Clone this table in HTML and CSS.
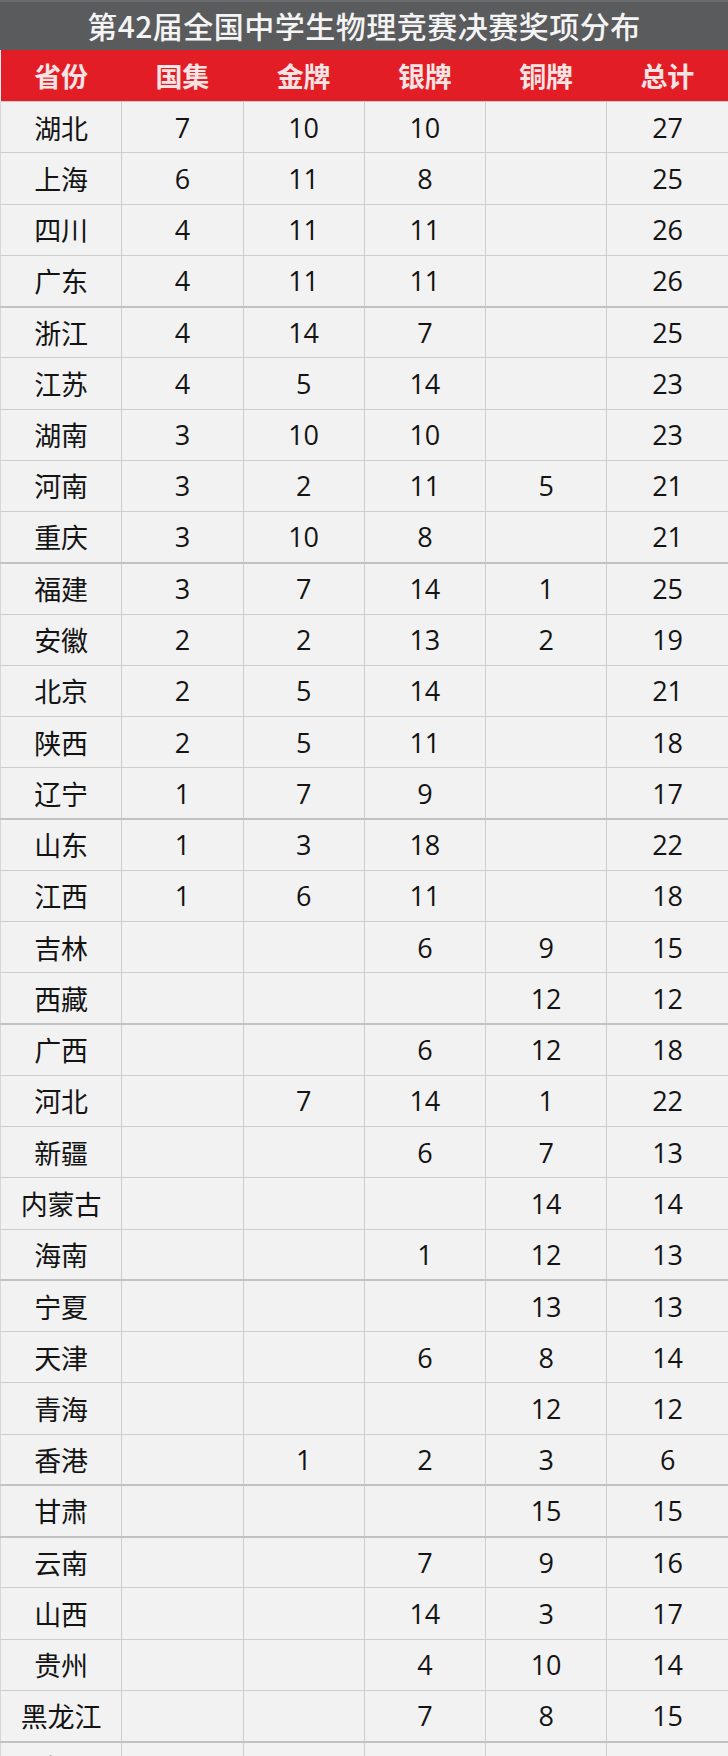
FILE: index.html
```html
<!DOCTYPE html>
<html lang="zh-CN">
<head>
<meta charset="utf-8">
<title>第42届全国中学生物理竞赛决赛奖项分布</title>
<link rel="stylesheet" href="styles.css">
</head>
<body>
<div class="board">
  <div class="title">第42届全国中学生物理竞赛决赛奖项分布</div>
  <table class="awards">
    <thead>
      <tr><th>省份</th><th>国集</th><th>金牌</th><th>银牌</th><th>铜牌</th><th>总计</th></tr>
    </thead>
    <tbody>
      <tr><td class="prov">湖北</td><td>7</td><td>10</td><td>10</td><td></td><td>27</td></tr>
      <tr><td class="prov">上海</td><td>6</td><td>11</td><td>8</td><td></td><td>25</td></tr>
      <tr><td class="prov">四川</td><td>4</td><td>11</td><td>11</td><td></td><td>26</td></tr>
      <tr class="thick"><td class="prov">广东</td><td>4</td><td>11</td><td>11</td><td></td><td>26</td></tr>
      <tr><td class="prov">浙江</td><td>4</td><td>14</td><td>7</td><td></td><td>25</td></tr>
      <tr><td class="prov">江苏</td><td>4</td><td>5</td><td>14</td><td></td><td>23</td></tr>
      <tr><td class="prov">湖南</td><td>3</td><td>10</td><td>10</td><td></td><td>23</td></tr>
      <tr><td class="prov">河南</td><td>3</td><td>2</td><td>11</td><td>5</td><td>21</td></tr>
      <tr class="thick"><td class="prov">重庆</td><td>3</td><td>10</td><td>8</td><td></td><td>21</td></tr>
      <tr><td class="prov">福建</td><td>3</td><td>7</td><td>14</td><td>1</td><td>25</td></tr>
      <tr><td class="prov">安徽</td><td>2</td><td>2</td><td>13</td><td>2</td><td>19</td></tr>
      <tr><td class="prov">北京</td><td>2</td><td>5</td><td>14</td><td></td><td>21</td></tr>
      <tr><td class="prov">陕西</td><td>2</td><td>5</td><td>11</td><td></td><td>18</td></tr>
      <tr class="thick"><td class="prov">辽宁</td><td>1</td><td>7</td><td>9</td><td></td><td>17</td></tr>
      <tr><td class="prov">山东</td><td>1</td><td>3</td><td>18</td><td></td><td>22</td></tr>
      <tr><td class="prov">江西</td><td>1</td><td>6</td><td>11</td><td></td><td>18</td></tr>
      <tr><td class="prov">吉林</td><td></td><td></td><td>6</td><td>9</td><td>15</td></tr>
      <tr class="thick"><td class="prov">西藏</td><td></td><td></td><td></td><td>12</td><td>12</td></tr>
      <tr><td class="prov">广西</td><td></td><td></td><td>6</td><td>12</td><td>18</td></tr>
      <tr><td class="prov">河北</td><td></td><td>7</td><td>14</td><td>1</td><td>22</td></tr>
      <tr><td class="prov">新疆</td><td></td><td></td><td>6</td><td>7</td><td>13</td></tr>
      <tr><td class="prov">内蒙古</td><td></td><td></td><td></td><td>14</td><td>14</td></tr>
      <tr class="thick"><td class="prov">海南</td><td></td><td></td><td>1</td><td>12</td><td>13</td></tr>
      <tr><td class="prov">宁夏</td><td></td><td></td><td></td><td>13</td><td>13</td></tr>
      <tr><td class="prov">天津</td><td></td><td></td><td>6</td><td>8</td><td>14</td></tr>
      <tr><td class="prov">青海</td><td></td><td></td><td></td><td>12</td><td>12</td></tr>
      <tr class="thick"><td class="prov">香港</td><td></td><td>1</td><td>2</td><td>3</td><td>6</td></tr>
      <tr class="thick"><td class="prov">甘肃</td><td></td><td></td><td></td><td>15</td><td>15</td></tr>
      <tr><td class="prov">云南</td><td></td><td></td><td>7</td><td>9</td><td>16</td></tr>
      <tr><td class="prov">山西</td><td></td><td></td><td>14</td><td>3</td><td>17</td></tr>
      <tr><td class="prov">贵州</td><td></td><td></td><td>4</td><td>10</td><td>14</td></tr>
      <tr class="thick"><td class="prov">黑龙江</td><td></td><td></td><td>7</td><td>8</td><td>15</td></tr>
      <tr><td class="prov">澳门</td><td></td><td></td><td></td><td>2</td><td>2</td></tr>
    </tbody>
  </table>
</div>
</body>
</html>
```

FILE: styles.css
```css
html, body {
  margin: 0;
  padding: 0;
  background: #f2f2f2;
}
body {
  font-family: "Open Sans", "Noto Sans CJK SC", sans-serif;
  color: #141414;
  overflow: hidden;
}
.board {
  width: 728px;
}
.title {
  height: 50px;
  background: #5a5b5d;
  color: #f4f4f4;
  font-family: "Noto Sans CJK SC", sans-serif;
  font-size: 30px;
  font-weight: 500;
  display: flex;
  align-items: center;
  justify-content: center;
  letter-spacing: 0.5px;
  box-shadow: inset 0 2px 0 #6a6b6d;
}
.awards {
  width: 728px;
  table-layout: fixed;
  border-collapse: collapse;
  border-spacing: 0;
}
.awards thead tr {
  height: 51.5px;
  background: #e31d25;
}
.awards th {
  padding: 0;
  font-family: "Noto Sans CJK SC", sans-serif;
  font-size: 27px;
  font-weight: 700;
  color: #f6e4e4;
  text-align: center;
  vertical-align: middle;
}
.awards tbody tr {
  height: 51.25px;
}
.awards td {
  padding: 0;
  border: 1px solid #cdcdcd;
  text-align: center;
  vertical-align: middle;
  font-size: 27px;
  line-height: 1;
  background: #f2f2f2;
}
.awards td:first-child {
  border-left: 1px solid #d6d6d6;
}
.awards td:last-child {
  border-right: none;
}
.awards td.prov {
  font-family: "Noto Sans CJK SC", sans-serif;
  font-size: 27px;
}
.awards tr.thick td {
  border-bottom: 2px solid #c2c2c2;
}
```
